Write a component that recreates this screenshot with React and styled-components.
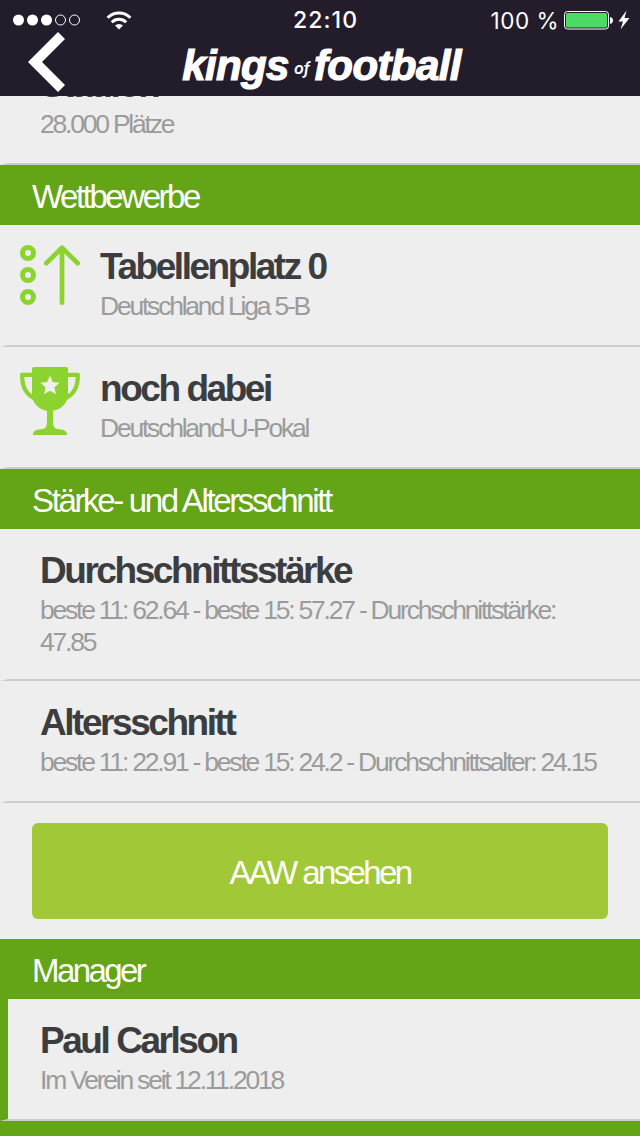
import React from 'react';
import styled, { createGlobalStyle } from 'styled-components';

const GlobalStyle = createGlobalStyle`
  * {
    box-sizing: border-box;
  }

  body {
    margin: 0;
    background: #eee;
    font-family: "Liberation Sans", Arial, sans-serif;
  }
`

const Screen = styled.div`
  display: grid;
  grid-template-rows: 96px 1fr;
  width: 640px;
  height: 1136px;
  overflow: hidden;
  background: #eee;
`

const TopBar = styled.header`
  display: flex;
  flex-direction: column;
  background: #231c2b;
  color: #fff;
`

const StatusBar = styled.div`
  display: grid;
  grid-template-columns: 1fr auto 1fr;
  align-items: center;
  height: 40px;
  padding: 0 10px 0 13px;
  font-family: Inter, sans-serif;
  font-size: 22.5px;
`

const StatusGroup = styled.div`
  display: flex;
  align-items: center;
  justify-content: ${({ $end }) => $end ? 'flex-end' : 'flex-start'};
`

const Clock = styled.span`
  padding-left: 8px;
  font-size: 23px;
  font-weight: 500;
  letter-spacing: 1.1px;
`

const Charge = styled.span`
  margin-right: 5px;
  letter-spacing: 0.5px;
`

const Dots = styled.svg`
  margin-right: 26px;
`

const TitleBar = styled.div`
  display: grid;
  grid-template-columns: 80px 1fr 80px;
  height: 56px;
`

const BackButton = styled.button`
  display: flex;
  align-items: flex-start;
  padding: 0;
  border: 0;
  background: none;
  color: inherit;
  overflow: visible;

  & svg {
    flex: none;
    margin: -8px 0 0 28px;
    overflow: visible;
  }
`

const Logo = styled.h1`
  display: flex;
  align-items: baseline;
  justify-content: center;
  margin: 0;
  padding-left: 3px;
  font-size: 42px;
  font-style: italic;
  font-weight: 700;
  letter-spacing: -0.6px;
  line-height: 52px;
  -webkit-text-stroke: 1.2px #fff;
`

const LogoSmall = styled.small`
  margin: 0 4px 0 5px;
  padding-bottom: 17px;
  align-self: flex-end;
  font-family: Inter, sans-serif;
  font-size: 16px;
  font-weight: 600;
  letter-spacing: 0;
  line-height: 22px;
  -webkit-text-stroke: 0;
`

const List = styled.main`
  display: flex;
  flex-direction: column;
  min-height: 0;
  overflow: hidden;
`

const SectionHeading = styled.h2`
  flex: none;
  height: 60px;
  margin: 0;
  padding: 2px 32px 0;
  background: #64a417;
  color: #fff;
  font-size: 33px;
  font-weight: 400;
  letter-spacing: ${({ $tracking }) => $tracking}px;
  line-height: 60px;
`

const Row = styled.div`
  display: flex;
  flex: none;
  min-height: 122px;
  padding: 20px 32px 21px ${({ $icon }) => $icon ? 12 : 32}px;
  margin-top: ${({ $scrolled }) => $scrolled ? -53 : 0}px;
  border-left: 8px solid ${({ $own }) => $own ? '#64a417' : 'transparent'};
  border-bottom: 2px solid #ccc;
  background: #eee;
`

const RowIcon = styled.div`
  width: 80px;
  height: 60px;

  & svg {
    display: block;
    overflow: visible;
  }
`

const RowTitle = styled.h3`
  margin: 0 0 1px;
  color: #3c3d3f;
  font-size: 37px;
  font-weight: 700;
  letter-spacing: -2.45px;
  line-height: 44px;
`

const RowText = styled.p`
  margin: 0;
  color: #9b9b9b;
  font-size: 26.5px;
  letter-spacing: -2.22px;
  line-height: 32px;
`

const Button = styled.button`
  flex: none;
  height: 96px;
  margin: 20px 32px;
  padding: 3px 0 0;
  border: 0;
  border-radius: 6px;
  background: #a1c937;
  color: #fff;
  font-family: inherit;
  font-size: 33px;
  letter-spacing: -2.6px;
`

const Footer = styled.div`
  flex: 1;
  background: #64a417;
`

function SignalDots () {
  return (
    <Dots width='67' height='12' viewBox='0 0 67 12'>
      {[0, 1, 2, 3, 4].map(i =>
        <circle
          key={i}
          cx={5.5 + i * 14}
          cy='6'
          r={i < 3 ? 5.5 : 5}
          fill={i < 3 ? '#fff' : 'none'}
          stroke={i < 3 ? 'none' : '#fff'}
        />
      )}
    </Dots>
  )
}

function WifiIcon () {
  return (
    <svg width='26' height='19' viewBox='0 0 26 19' fill='none' stroke='#fff' strokeWidth='3'>
      <path d='M1.6 6.8a16.2 16.2 0 0 1 22.8 0' />
      <path d='M5.8 11.2a10.2 10.2 0 0 1 14.4 0' />
      <path d='M13 18.6l-4-4a5.6 5.6 0 0 1 8 0z' fill='#fff' stroke='none' />
    </svg>
  )
}

function BatteryIcon () {
  return (
    <svg width='66' height='20' viewBox='0 0 66 20'>
      <rect x='0.5' y='1.5' width='44' height='17.5' rx='3' fill='none' stroke='#fff' />
      <rect x='2' y='3' width='41' height='14.5' rx='1.5' fill='#4cd964' />
      <path d='M46 7c4 .5 4 6.5 0 7z' fill='#fff' />
      <path d='M62.5 0.5L54.5 11.5h4.5L56.5 19.5 65.5 8h-5z' fill='#fff' />
    </svg>
  )
}

function RankingIcon () {
  return (
    <svg width='60' height='60' viewBox='0 0 60 60' fill='none' stroke='#8cd32f' strokeWidth='5'>
      <circle cx='8' cy='8' r='5.5' />
      <circle cx='8' cy='30' r='5.5' />
      <circle cx='8' cy='52' r='5.5' />
      <path d='M42 57.7V3M26.3 18.2L42 2.8 57.7 18.2' strokeWidth='4.7' strokeLinecap='round' strokeLinejoin='round' />
    </svg>
  )
}

function TrophyIcon () {
  return (
    <svg width='60' height='70' viewBox='0 0 60 70'>
      <path
        d='M13 7.8H2.1C2 20 6 28 15.5 31.5M47 7.8H57.9C58 20 54 28 44.5 31.5'
        fill='none'
        stroke='#8cd32f'
        strokeWidth='4.2'
        strokeLinejoin='round'
      />
      <path
        d='M14 0H46Q48 0 48 2V27C48 36 42 42 33 43.8V55C33 60 35 62 39 62.3 44 62.5 47 64 47 68H13C13 64 16 62.5 21 62.3 25 62 27 60 27 55V43.8C18 42 12 36 12 27V2Q12 0 14 0Z'
        fill='#8cd32f'
      />
      <path d='M30 8.5l2.8 6.6 6.8.6-5.2 4.7 1.6 6.9L30 23.8l-6 3.5 1.6-6.9-5.2-4.7 6.8-.6z' fill='#eee' />
    </svg>
  )
}

function Entry ({ title, text, icon, ...rest }) {
  return (
    <Row $icon={Boolean(icon)} {...rest}>
      {icon && <RowIcon>{icon}</RowIcon>}
      <div>
        <RowTitle>{title}</RowTitle>
        <RowText>{text}</RowText>
      </div>
    </Row>
  )
}

export default function App () {
  return (
    <>
      <GlobalStyle />
      <Screen>
        <TopBar>
          <StatusBar>
            <StatusGroup>
              <SignalDots />
              <WifiIcon />
            </StatusGroup>
            <Clock>22:10</Clock>
            <StatusGroup $end>
              <Charge>100 %</Charge>
              <BatteryIcon />
            </StatusGroup>
          </StatusBar>
          <TitleBar>
            <BackButton aria-label='Zurück'>
              <svg width='37' height='60' viewBox='0 0 37 60'>
                <path d='M30 0l7 7-23 23 23 23-7 7L0 30z' fill='#fff' />
              </svg>
            </BackButton>
            <Logo>kings<LogoSmall>of</LogoSmall>football</Logo>
          </TitleBar>
        </TopBar>
        <List>
          <Entry $scrolled title='Stadion' text='28.000 Plätze' />
          <SectionHeading $tracking={-2.45}>Wettbewerbe</SectionHeading>
          <Entry icon={<RankingIcon />} title='Tabellenplatz 0' text='Deutschland Liga 5-B' />
          <Entry icon={<TrophyIcon />} title='noch dabei' text='Deutschland-U-Pokal' />
          <SectionHeading $tracking={-2.35}>Stärke- und Altersschnitt</SectionHeading>
          <Entry title='Durchschnittsstärke' text='beste 11: 62.64 - beste 15: 57.27 - Durchschnittstärke: 47.85' />
          <Entry title='Altersschnitt' text='beste 11: 22.91 - beste 15: 24.2 - Durchschnittsalter: 24.15' />
          <Button>AAW ansehen</Button>
          <SectionHeading $tracking={-2.6}>Manager</SectionHeading>
          <Entry $own title='Paul Carlson' text='Im Verein seit 12.11.2018' />
          <Footer />
        </List>
      </Screen>
    </>
  )
}
